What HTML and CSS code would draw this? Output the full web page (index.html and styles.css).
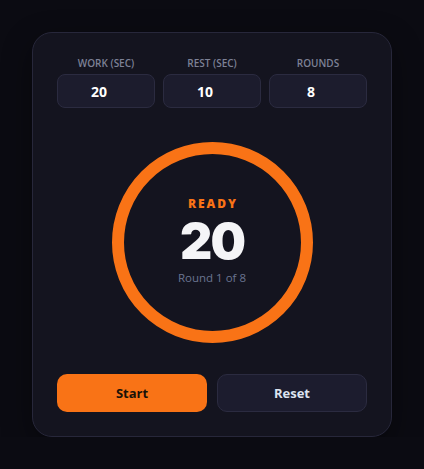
FILE: index.html
```html
<!DOCTYPE html>
<html lang="en">
<head>
<meta charset="utf-8">
<title>Interval Timer</title>
<link rel="stylesheet" href="styles.css">
</head>
<body>
<div class="card">
  <div class="settings">
    <label class="field">
      <span class="field-label">Work (sec)</span>
      <input class="field-input" type="text" value="20">
    </label>
    <label class="field">
      <span class="field-label">Rest (sec)</span>
      <input class="field-input" type="text" value="10">
    </label>
    <label class="field">
      <span class="field-label">Rounds</span>
      <input class="field-input" type="text" value="8">
    </label>
  </div>
  <div class="timer-wrap">
    <div class="ring">
      <div class="phase">READY</div>
      <div class="time">20</div>
      <div class="round">Round 1 of 8</div>
    </div>
  </div>
  <div class="actions">
    <button class="btn btn-start">Start</button>
    <button class="btn btn-reset">Reset</button>
  </div>
</div>
</body>
</html>
```
FILE: styles.css
```css
* { box-sizing: border-box; }
html, body { margin: 0; padding: 0; }
body {
  background: #0b0b12;
  font-family: "Open Sans", "Noto Sans", "Liberation Sans", sans-serif;
  padding-top: 32px;
}
.card {
  width: 360px;
  margin-left: 32px;
  background: #14141f;
  border: 1px solid #27273a;
  border-radius: 20px;
  padding: 24px;
  box-shadow: 0 10px 30px rgba(0,0,0,0.4);
}
.settings {
  display: grid;
  grid-template-columns: repeat(3, 1fr);
  gap: 8px;
}
.field {
  display: flex;
  flex-direction: column;
  align-items: stretch;
}
.field-label {
  font-size: 10px;
  line-height: 12px;
  font-weight: 600;
  color: #7d8196;
  text-transform: uppercase;
  text-align: center;
  margin-bottom: 5px;
}
.field-input {
  height: 34px;
  width: 100%;
  background: #1c1c2d;
  border: 1px solid #2b2b40;
  border-radius: 8px;
  color: #ffffff;
  font-family: inherit;
  font-size: 14px;
  font-weight: 700;
  text-align: center;
  padding: 0 14px 0 0;
  outline: none;
}
.timer-wrap {
  display: flex;
  justify-content: center;
  margin-top: 34px;
}
.ring {
  width: 201px;
  height: 201px;
  border-radius: 50%;
  border: 12px solid #f97316;
  display: flex;
  flex-direction: column;
  align-items: center;
  justify-content: center;
  padding-bottom: 4px;
}
.phase {
  color: #f97316;
  font-size: 12px;
  line-height: 17px;
  font-weight: 800;
  letter-spacing: 2px;
  margin-left: 2px;
}
.time {
  color: #f5f5f7;
  font-family: "Inter", "Open Sans", sans-serif;
  font-size: 50px;
  line-height: 58px;
  font-weight: 900;
  letter-spacing: -2px;
}
.round {
  color: #6b7591;
  font-size: 11.5px;
  line-height: 16px;
}
.actions {
  display: grid;
  grid-template-columns: 1fr 1fr;
  gap: 10px;
  margin-top: 31px;
}
.btn {
  height: 38px;
  border-radius: 10px;
  font-family: inherit;
  font-size: 13px;
  font-weight: 700;
  cursor: pointer;
}
.btn-start {
  background: #f97316;
  border: none;
  color: #1a1208;
}
.btn-reset {
  background: #1c1c2e;
  border: 1px solid #2b2b40;
  color: #dde3f0;
}
```
